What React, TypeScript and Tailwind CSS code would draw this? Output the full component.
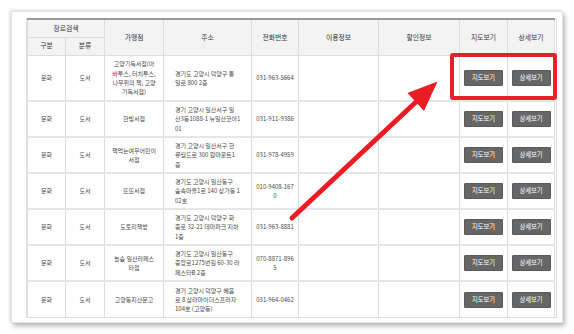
import React from "react";

type Row = { name: string[]; addr: string[]; phone: string[] };

const rows: Row[] = [
  {
    name: ["고양기독서점(아", "바투스, 터치투스,", "나무위의 책, 고양", "기독서점)"],
    addr: ["경기도 고양시 덕양구 통", "일로 800 2층"],
    phone: ["031-963-5664"],
  },
  {
    name: ["한빛서점"],
    addr: ["경기 고양시 일산서구 일", "산3동1088-1 뉴일산코아1", "01"],
    phone: ["031-911-9386"],
  },
  {
    name: ["책먹는여우어린이", "서점"],
    addr: ["경기 고양시 일산서구 한", "류월드로 300 원마운트1", "층"],
    phone: ["031-978-4959"],
  },
  {
    name: ["또또서점"],
    addr: ["경기도 고양시 일산동구", "숲속마을1로 140 상가동 1", "02호"],
    phone: ["010-9408-167", "0"],
  },
  {
    name: ["도토리책방"],
    addr: ["경기도 고양시 덕양구 화", "중로 32-21 테마파크 지하", "1층"],
    phone: ["031-963-8881"],
  },
  {
    name: ["놀숲 일산라페스", "타점"],
    addr: ["경기도 고양시 일산동구", "중앙로1275번길 60-30 라", "페스타B 2층"],
    phone: ["070-8871-896", "5"],
  },
  {
    name: ["고양동지산문고"],
    addr: ["경기 고양시 덕양구 혜음", "로 8 삼라마이더스프라자", "104호 (고양동)"],
    phone: ["031-964-0462"],
  },
];

function Lines({ lines }: { lines: string[] }) {
  return (
    <>
      {lines.map((l, i) => (
        <div key={i} className="whitespace-nowrap">
          {l}
        </div>
      ))}
    </>
  );
}

function Btn({ label }: { label: string }) {
  return (
    <div className="mx-auto flex h-[16px] w-[39px] items-center justify-center rounded-[1px] border border-[#5a5a5a] bg-[#666666] text-[6.3px] text-white">
      {label}
    </div>
  );
}

const th = "border border-[#dddddd] bg-[#f3f3f3] text-center font-normal text-[#333333] text-[6.8px]";
const td = "border-x border-[#dddddd] align-middle text-[#4a4a4a]";

export default function App() {
  return (
    <div className="relative h-[334px] w-[574px] overflow-hidden bg-white font-['Noto_Sans_CJK_KR','Noto_Sans',sans-serif]">
      <div className="ml-[11px] mt-[11px] h-[312px] w-[552px] border border-[#e4e4e4] bg-white pl-[14px] pt-[6px] shadow-[2px_3px_5px_rgba(0,0,0,0.28),-1px_-1px_3px_rgba(0,0,0,0.12)]">
        <div className="w-[531px] border-x border-b border-[#dddddd]">
          <table className="w-[527px] table-fixed border-collapse text-[6px] leading-[9.2px]">
            <colgroup>
              <col className="w-[38px]" />
              <col className="w-[39px]" />
              <col className="w-[59px]" />
              <col className="w-[88px]" />
              <col className="w-[47px]" />
              <col className="w-[80px]" />
              <col className="w-[81px]" />
              <col className="w-[48px]" />
              <col className="w-[47px]" />
            </colgroup>
            <thead>
              <tr className="h-[18px] border-t-2 border-t-[#9a9a9a]">
                <th colSpan={2} className={th}>
                  장르검색
                </th>
                <th rowSpan={2} className={th}>
                  가맹점
                </th>
                <th rowSpan={2} className={th}>
                  주소
                </th>
                <th rowSpan={2} className={th}>
                  전화번호
                </th>
                <th rowSpan={2} className={th}>
                  이용정보
                </th>
                <th rowSpan={2} className={th}>
                  할인정보
                </th>
                <th rowSpan={2} className={th}>
                  지도보기
                </th>
                <th rowSpan={2} className={th}>
                  상세보기
                </th>
              </tr>
              <tr className="h-[18px]">
                <th className={th}>구분</th>
                <th className={th}>분류</th>
              </tr>
            </thead>
            <tbody>
              {rows.map((r, i) => (
                <tr
                  key={i}
                  className={`${i === 0 ? "h-[46px]" : "h-[36px]"} border-b-2 border-b-[#e6e6e6] last:border-b-0`}
                >
                  <td className={`${td} text-center`}>문화</td>
                  <td className={`${td} text-center`}>도서</td>
                  <td className={`${td} text-center`}>
                    <Lines lines={r.name} />
                  </td>
                  <td className={`${td} pl-[11px] text-left`}>
                    <Lines lines={r.addr} />
                  </td>
                  <td className={`${td} text-center`}>
                    <Lines lines={r.phone} />
                  </td>
                  <td className={td}></td>
                  <td className={td}></td>
                  <td className={td}>
                    <Btn label="지도보기" />
                  </td>
                  <td className={td}>
                    <Btn label="상세보기" />
                  </td>
                </tr>
              ))}
            </tbody>
          </table>
        </div>
      </div>

      <div className="absolute left-[450px] top-[53px] h-[47px] w-[107px] rounded-[3px] border-[4px] border-[#e8202a]" />
      <svg
        className="absolute left-0 top-0"
        width="574"
        height="334"
        viewBox="0 0 574 334"
      >
        <line x1="292" y1="218" x2="417" y2="101" stroke="#ec1c24" strokeWidth="5" strokeLinecap="round" />
        <polygon points="437.5,81.5 407.5,93 424,111" fill="#ec1c24" />
      </svg>
    </div>
  );
}
